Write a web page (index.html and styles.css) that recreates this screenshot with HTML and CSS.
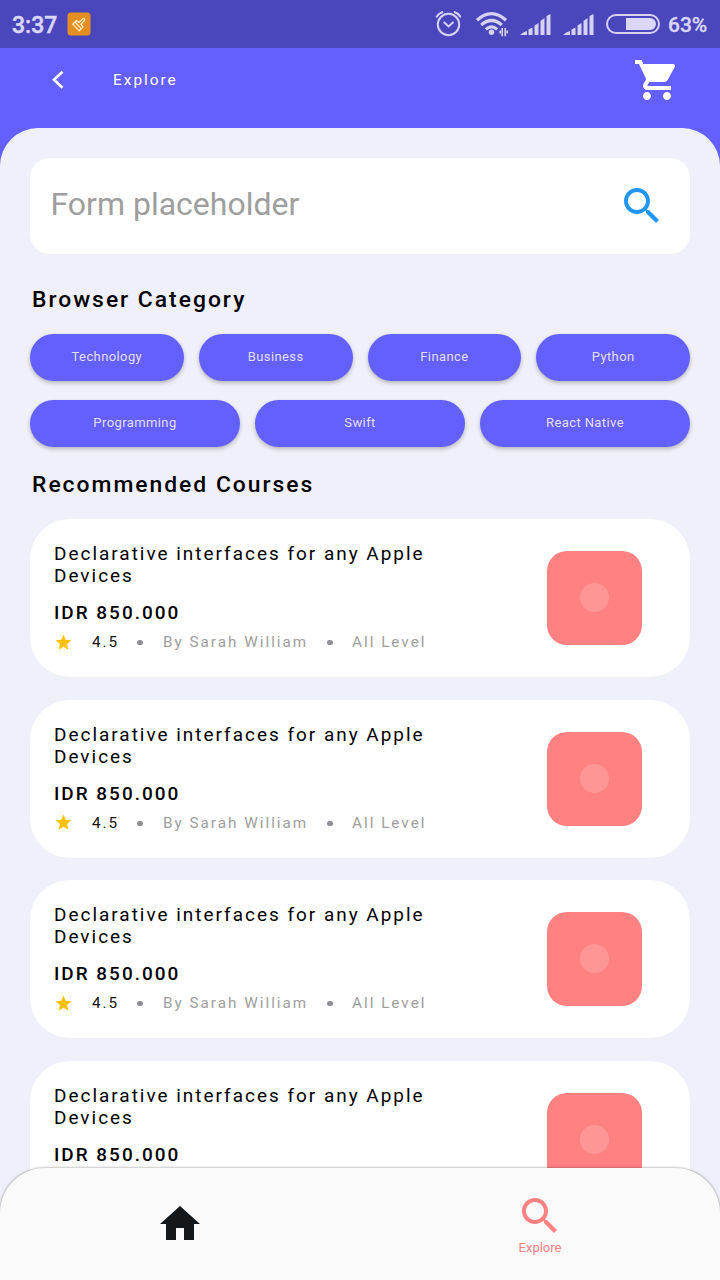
FILE: index.html
```
<!DOCTYPE html>
<html lang="en">
<head>
<meta charset="utf-8">
<title>Explore</title>
<link rel="stylesheet" href="styles.css">
</head>
<body>
<svg class="defs" width="0" height="0">
  <symbol id="search" viewBox="0 0 24 24"><path d="M15.5 14h-.79l-.28-.27C15.41 12.59 16 11.11 16 9.5 16 5.91 13.09 3 9.5 3S3 5.91 3 9.5 5.91 16 9.5 16c1.61 0 3.09-.59 4.23-1.57l.27.28v.79l5 4.99L20.49 19l-4.99-5zm-6 0C7.01 14 5 11.99 5 9.5S7.01 5 9.5 5 14 7.01 14 9.5 11.99 14 9.5 14z"/></symbol>
  <symbol id="star" viewBox="0 0 24 24"><path d="M12 17.27L18.18 21l-1.64-7.03L22 9.24l-7.19-.61L12 2 9.19 8.63 2 9.24l5.46 4.73L5.82 21z"/></symbol>
  <symbol id="signal" viewBox="0 0 31 22"><path d="M0 21Q4 17.5 7 17V21ZM8.5 15.5L12.5 13.5V21H8.5ZM14.5 11.5L18.5 9V21H14.5ZM20.5 7L24.5 4V21H20.5ZM26.5 2L30.5 0V21H26.5Z"/></symbol>
</svg>
<div class="screen">
  <div class="status">
    <span class="clock">3:37</span>
    <svg class="app-badge" viewBox="0 0 24 24"><rect x=".5" y=".5" width="23" height="23" rx="3.5" fill="#e58f22"/><g fill="none" stroke="#fff3cf" stroke-width="1.2" stroke-linejoin="round"><path d="M9.5 8.5L12 10.5L16.2 6.6Q17.6 6.4 17.8 7.8L14 12.5L16 14.7L12.3 18.8L5.7 12.2Z"/><path d="M8 10L14.2 16.6"/></g></svg>
    <div class="indicators">
      <svg class="alarm" viewBox="0 0 26 26"><g fill="none" stroke="#d5d2f4" stroke-linecap="round"><circle cx="13.5" cy="13.5" r="10.7" stroke-width="2"/><path d="M9.3 11.5l4.3 4 4.3-4" stroke-width="2"/><path d="M1.8 5.5Q3.5 2.5 7.2 1.2M25.2 5.5Q23.5 2.5 19.8 1.2" stroke-width="2.2"/></g></svg>
      <svg class="wifi" viewBox="0 0 32 25"><g fill="none" stroke="#d5d2f4" stroke-width="3.2"><path d="M1 8.2Q15.5-4.8 30 8.2"/><path d="M5.2 13Q15.5 4 25.8 13"/><path d="M9.8 17.4Q15.5 12.3 21.2 17.4"/></g><circle cx="15.5" cy="20.3" r="2.7" fill="#d5d2f4"/><path d="M26.2 16v8.2M24.2 18.5v3M29.2 24.2v-8.2M31.2 21.5v-3" fill="none" stroke="#d5d2f4" stroke-width="1.6"/></svg>
      <svg class="signal"><use href="#signal"/></svg>
      <svg class="signal second"><use href="#signal"/></svg>
      <svg class="battery" viewBox="0 0 54 20"><rect x="1" y="1" width="52" height="18" rx="9" fill="none" stroke="#d5d2f4" stroke-width="2"/><path d="M20 4H44a6 6 0 0 1 0 12H20Z" fill="#dcd8fb"/></svg>
      <span class="percent">63%</span>
    </div>
  </div>
  <header class="header">
    <svg class="back" viewBox="0 0 12 20"><path d="M10.5 1.8L2 9.8l8.5 8" fill="none" stroke="#fff" stroke-width="2.6"/></svg>
    <span class="header-title">Explore</span>
    <svg class="cart" viewBox="0 0 24 24"><path d="M7 18c-1.1 0-1.99.9-1.99 2S5.9 22 7 22s2-.9 2-2-.9-2-2-2zM1 2v2h2l3.6 7.59-1.35 2.45c-.16.28-.25.61-.25.96 0 1.1.9 2 2 2h12v-2H7.42c-.14 0-.25-.11-.25-.25l.03-.12.9-1.63h7.45c.75 0 1.41-.41 1.75-1.03l3.58-6.49c.08-.14.12-.31.12-.48 0-.55-.45-1-1-1H5.21l-.94-2H1zm16 16c-1.1 0-1.99.9-1.99 2s.89 2 1.99 2 2-.9 2-2-.9-2-2-2z"/></svg>
  </header>
  <main class="panel">
    <div class="search-box"><span>Form placeholder</span><svg class="icon-48"><use href="#search"/></svg></div>
    <h2 class="heading">Browser Category</h2>
    <div class="chips"><button>Technology</button><button>Business</button><button>Finance</button><button>Python</button></div>
    <div class="chips last"><button>Programming</button><button>Swift</button><button>React Native</button></div>
    <h2 class="heading recommended">Recommended Courses</h2>
    <div class="courses">
      <article class="card"><div class="info"><h3>Declarative interfaces for any Apple Devices</h3><p class="price">IDR 850.000</p><p class="meta"><svg><use href="#star"/></svg><span class="rating">4.5</span><i></i><span class="author">By Sarah William</span><i></i><span class="level">All Level</span></p></div><div class="thumb"></div></article>
      <article class="card"><div class="info"><h3>Declarative interfaces for any Apple Devices</h3><p class="price">IDR 850.000</p><p class="meta"><svg><use href="#star"/></svg><span class="rating">4.5</span><i></i><span class="author">By Sarah William</span><i></i><span class="level">All Level</span></p></div><div class="thumb"></div></article>
      <article class="card"><div class="info"><h3>Declarative interfaces for any Apple Devices</h3><p class="price">IDR 850.000</p><p class="meta"><svg><use href="#star"/></svg><span class="rating">4.5</span><i></i><span class="author">By Sarah William</span><i></i><span class="level">All Level</span></p></div><div class="thumb"></div></article>
      <article class="card"><div class="info"><h3>Declarative interfaces for any Apple Devices</h3><p class="price">IDR 850.000</p></div><div class="thumb"></div></article>
    </div>
  </main>
  <nav class="tabs">
    <a class="tab home"><svg class="icon-48" viewBox="0 0 24 24"><path d="M10 20v-6h4v6h5v-8h3L12 3 2 12h3v8z"/></svg></a>
    <a class="tab explore"><svg class="icon-48"><use href="#search"/></svg><span>Explore</span></a>
  </nav>
</div>
</body>
</html>
```
FILE: styles.css
```
* { box-sizing: border-box; }
body { margin: 0; font-family: Roboto, sans-serif; overflow: hidden; }
h2, h3, p { margin: 0; font-weight: 400; }
svg { display: block; flex: none; }
.defs { position: absolute; }
.screen { position: relative; width: 720px; height: 1280px; overflow: hidden; background: #645fff; display: flex; flex-direction: column; }
.status { height: 48px; flex: none; background: #4a47bc; display: flex; align-items: center; padding: 0 12px 0 12px; color: #d9d6f7; }
.clock { font-size: 23px; font-weight: 500; width: 55px; padding-top: 2px; -webkit-text-stroke: .5px; }
.app-badge { width: 24px; height: 24px; }
.indicators { margin-left: auto; display: flex; align-items: center; }
.alarm { width: 26px; height: 26px; margin-right: 15px; }
.wifi { width: 32px; height: 25px; margin-right: 12px; overflow: visible; }
.signal { width: 31px; height: 22px; fill: #d5d2f4; margin-top: 2px; }
.second { margin-left: 12px; }
.battery { width: 54px; height: 20px; margin: 0 8px 0 12px; }
.percent { font-size: 21px; font-weight: 500; width: 40px; padding-top: 2px; -webkit-text-stroke: .3px; white-space: nowrap; }
.header { height: 80px; flex: none; display: flex; align-items: center; padding: 0 39px 16px 52px; color: #fff; }
.back { width: 12px; height: 20px; }
.header-title { margin-left: 49px; font-size: 15.4px; letter-spacing: 2px; }
.cart { width: 48px; height: 48px; margin-left: auto; fill: #fff; }
.panel { flex: none; height: 1152px; overflow: hidden; background: #f0f0fa; border-radius: 38px 38px 0 0; padding: 30px 30px 0; }
.search-box { height: 96px; background: #fff; border-radius: 20px; padding: 0 24px 0 20.5px; display: flex; align-items: center; justify-content: space-between; color: #9e9e9e; font-size: 32px; }
.search-box span { margin-top: -4px; }
.search-box svg { fill: #2196f3; }
.icon-48 { width: 48px; height: 48px; }
.heading { height: 28px; line-height: 28px; margin: 32px 0 19.5px 2px; font-size: 22.85px; font-weight: 500; letter-spacing: 2px; }
.chips { display: flex; gap: 15px; margin-bottom: 19px; }
.chips.last { margin-bottom: 24px; }
.chips button { flex: 1 1 0; height: 47px; padding: 0 0 1px; border: 0; border-radius: 24px; background: #645fff; color: #e0dffd; font: 400 13px Roboto, sans-serif; letter-spacing: .4px; box-shadow: 0 2px 4px rgba(0,0,0,.25); }
.recommended { margin: 0 0 20.5px 2px; }
.courses { display: flex; flex-direction: column; gap: 22.6px; }
.card { height: 158px; flex: none; background: #fff; border-radius: 40px; display: flex; justify-content: space-between; padding: 24px 48px 0 24px; }
.info { width: 410px; }
.info h3 { font-size: 18.95px; line-height: 22px; letter-spacing: 2px; }
.price { margin-top: 15px; font-size: 18.95px; line-height: 22px; font-weight: 500; letter-spacing: 2px; }
.meta { margin-top: 8px; display: flex; align-items: center; height: 20px; font-size: 15.25px; letter-spacing: 2px; color: #9e9e9e; white-space: nowrap; }
.meta svg { width: 19px; height: 19px; fill: #ffc107; margin-left: -.5px; }
.meta i { width: 6px; height: 5px; border-radius: 3px; background: #8e8e97; flex: none; margin-top: 1px; }
.rating { width: 45px; margin-left: 19.5px; color: #111; }
.author { margin-left: 20px; width: 163.5px; }
.level { margin-left: 19.5px; }
.thumb { width: 95px; height: 94px; margin-top: 8px; border-radius: 20px; background: radial-gradient(circle at 47.5px 46.5px, #ff9696 14px, #ff8181 15px); }
.courses .card:last-child .thumb { height: 104px; }
.tabs { position: absolute; left: 0; right: 0; bottom: 0; height: 112px; background: #fafafa; border-radius: 45px 45px 0 0; box-shadow: 0 0 2px 1px rgba(0,0,0,.22); display: flex; }
.tab { flex: 1; display: flex; flex-direction: column; align-items: center; }
.home { padding-top: 32px; fill: #15181b; }
.explore { padding-top: 24px; fill: #ff8181; color: #ff8181; font-size: 13px; }
.explore span { line-height: 16px; }
```
